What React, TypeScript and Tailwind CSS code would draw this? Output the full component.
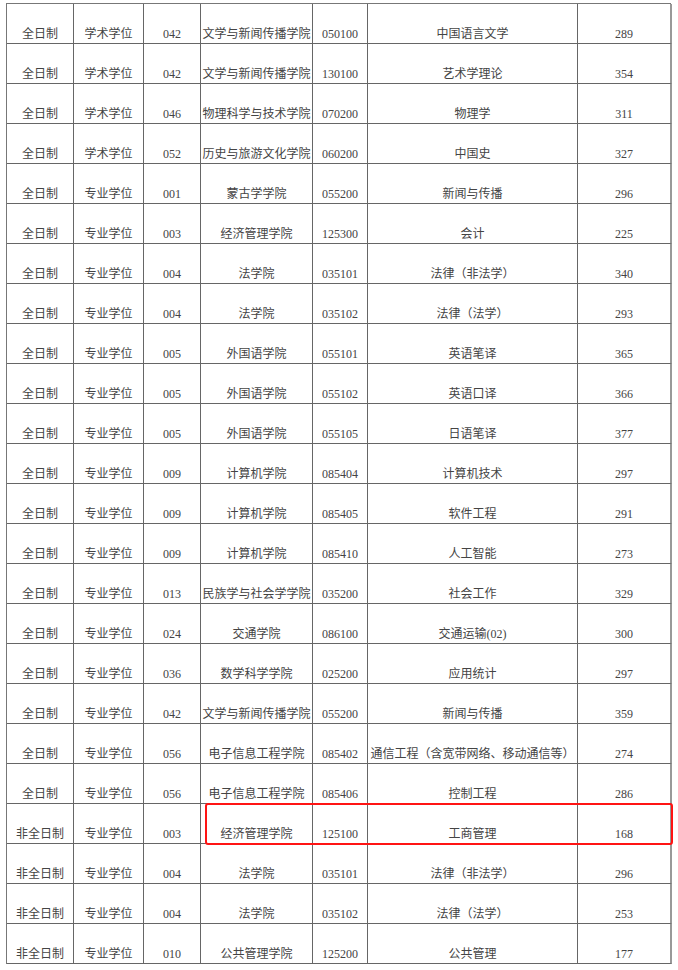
const ROWS: [string, string, string, string, string, string, string][] = [
  ["全日制", "学术学位", "042", "文学与新闻传播学院", "050100", "中国语言文学", "289"],
  ["全日制", "学术学位", "042", "文学与新闻传播学院", "130100", "艺术学理论", "354"],
  ["全日制", "学术学位", "046", "物理科学与技术学院", "070200", "物理学", "311"],
  ["全日制", "学术学位", "052", "历史与旅游文化学院", "060200", "中国史", "327"],
  ["全日制", "专业学位", "001", "蒙古学学院", "055200", "新闻与传播", "296"],
  ["全日制", "专业学位", "003", "经济管理学院", "125300", "会计", "225"],
  ["全日制", "专业学位", "004", "法学院", "035101", "法律（非法学）", "340"],
  ["全日制", "专业学位", "004", "法学院", "035102", "法律（法学）", "293"],
  ["全日制", "专业学位", "005", "外国语学院", "055101", "英语笔译", "365"],
  ["全日制", "专业学位", "005", "外国语学院", "055102", "英语口译", "366"],
  ["全日制", "专业学位", "005", "外国语学院", "055105", "日语笔译", "377"],
  ["全日制", "专业学位", "009", "计算机学院", "085404", "计算机技术", "297"],
  ["全日制", "专业学位", "009", "计算机学院", "085405", "软件工程", "291"],
  ["全日制", "专业学位", "009", "计算机学院", "085410", "人工智能", "273"],
  ["全日制", "专业学位", "013", "民族学与社会学学院", "035200", "社会工作", "329"],
  ["全日制", "专业学位", "024", "交通学院", "086100", "交通运输(02)", "300"],
  ["全日制", "专业学位", "036", "数学科学学院", "025200", "应用统计", "297"],
  ["全日制", "专业学位", "042", "文学与新闻传播学院", "055200", "新闻与传播", "359"],
  ["全日制", "专业学位", "056", "电子信息工程学院", "085402", "通信工程（含宽带网络、移动通信等）", "274"],
  ["全日制", "专业学位", "056", "电子信息工程学院", "085406", "控制工程", "286"],
  ["非全日制", "专业学位", "003", "经济管理学院", "125100", "工商管理", "168"],
  ["非全日制", "专业学位", "004", "法学院", "035101", "法律（非法学）", "296"],
  ["非全日制", "专业学位", "004", "法学院", "035102", "法律（法学）", "253"],
  ["非全日制", "专业学位", "010", "公共管理学院", "125200", "公共管理", "177"],
];

export default function App() {
  return (
    <div
      className="relative h-[970px] w-[678px] overflow-hidden bg-white text-[12px] text-[#444]"
      style={{ fontFamily: '"Liberation Serif", "Noto Sans CJK SC", serif' }}
    >
      <div className="ml-[6px] mt-[3px] grid w-[665px] grid-cols-[67px_70px_57px_112px_55px_210px_94px] border-l border-t border-[#777]">
        {ROWS.map((row, i) =>
          row.map((cell, j) => (
            <div
              key={`${i}-${j}`}
              className={`flex h-[40px] items-end justify-center whitespace-nowrap border-b border-[#666] pb-[2px] leading-[14px] ${
                j === 6 ? "border-r-2 border-r-[#999]" : "border-r border-r-[#666]"
              }`}
            >
              {cell}
            </div>
          ))
        )}
      </div>

      <div className="absolute left-[205px] top-[803px] h-[42px] w-[468px] rounded-[3px] border-2 border-[#ff1414]" />
    </div>
  );
}
